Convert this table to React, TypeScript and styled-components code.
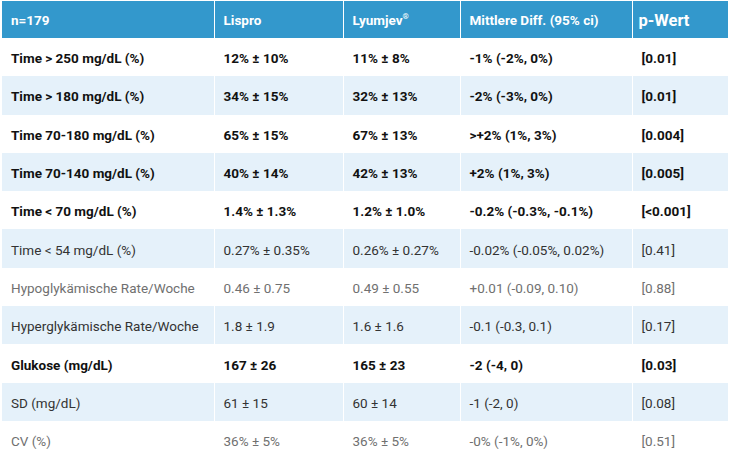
import React from "react";
import styled, { createGlobalStyle } from "styled-components";

const Global = createGlobalStyle`
  html, body { margin: 0; padding: 0; background: #fff; }
  body { font-family: Roboto, "Liberation Sans", Arial, sans-serif; }
`;

const Wrap = styled.div`
  padding: 1px 7px 0 2px;
`;

const Table = styled.table`
  width: 726px;
  border-collapse: collapse;
  table-layout: fixed;
  font-family: Roboto, "Liberation Sans", Arial, sans-serif;
`;

const Col = styled.col<{ $w: number }>`
  width: ${(p) => p.$w}px;
`;

const HeadCell = styled.th<{ $big?: boolean }>`
  box-sizing: border-box;
  background: #3398cc;
  color: #fff;
  text-align: left;
  font-weight: 700;
  font-size: ${(p) => (p.$big ? "16.5px" : "13.5px")};
  height: 37px;
  padding: 1px 0 0 ${(p) => (p.$big ? "6px" : "9px")};
  border-left: 1px solid #fff;
  &:first-child { border-left: none; }
  sup { font-size: 8px; vertical-align: 6px; line-height: 0; }
`;

const Row = styled.tr<{ $stripe: boolean }>`
  background: ${(p) => (p.$stripe ? "#e5f1fa" : "#fff")};
`;

const Cell = styled.td<{ $tone: "bold" | "dark" | "light" }>`
  box-sizing: border-box;
  height: 38.3px;
  padding: 2px 0 0 9px;
  font-size: 13.5px;
  font-weight: ${(p) => (p.$tone === "bold" ? 700 : 400)};
  color: ${(p) => (p.$tone === "bold" ? "#111" : p.$tone === "dark" ? "#333" : "#707070")};
  border-left: 1px solid #fff;
  white-space: nowrap;
  &:first-child { border-left: none; }
`;

type Tone = "bold" | "dark" | "light";
const widths = [212, 129, 117, 172, 96];
const rows: { tone: Tone; cells: string[] }[] = [
  { tone: "bold", cells: ["Time > 250 mg/dL (%)", "12% ± 10%", "11% ± 8%", "-1% (-2%, 0%)", "[0.01]"] },
  { tone: "bold", cells: ["Time > 180 mg/dL (%)", "34% ± 15%", "32% ± 13%", "-2% (-3%, 0%)", "[0.01]"] },
  { tone: "bold", cells: ["Time 70-180 mg/dL (%)", "65% ± 15%", "67% ± 13%", ">+2% (1%, 3%)", "[0.004]"] },
  { tone: "bold", cells: ["Time 70-140 mg/dL (%)", "40% ± 14%", "42% ± 13%", "+2% (1%, 3%)", "[0.005]"] },
  { tone: "bold", cells: ["Time < 70 mg/dL (%)", "1.4% ± 1.3%", "1.2% ± 1.0%", "-0.2% (-0.3%, -0.1%)", "[<0.001]"] },
  { tone: "dark", cells: ["Time < 54 mg/dL (%)", "0.27% ± 0.35%", "0.26% ± 0.27%", "-0.02% (-0.05%, 0.02%)", "[0.41]"] },
  { tone: "light", cells: ["Hypoglykämische Rate/Woche", "0.46 ± 0.75", "0.49 ± 0.55", "+0.01 (-0.09, 0.10)", "[0.88]"] },
  { tone: "dark", cells: ["Hyperglykämische Rate/Woche", "1.8 ± 1.9", "1.6 ± 1.6", "-0.1 (-0.3, 0.1)", "[0.17]"] },
  { tone: "bold", cells: ["Glukose (mg/dL)", "167 ± 26", "165 ± 23", "-2 (-4, 0)", "[0.03]"] },
  { tone: "dark", cells: ["SD (mg/dL)", "61 ± 15", "60 ± 14", "-1 (-2, 0)", "[0.08]"] },
  { tone: "light", cells: ["CV (%)", "36% ± 5%", "36% ± 5%", "-0% (-1%, 0%)", "[0.51]"] },
];

export default function App() {
  return (
    <>
      <Global />
      <Wrap>
        <Table>
          <colgroup>
            {widths.map((w, i) => (
              <Col key={i} $w={w} />
            ))}
          </colgroup>
          <thead>
            <tr>
              <HeadCell>n=179</HeadCell>
              <HeadCell>Lispro</HeadCell>
              <HeadCell>
                Lyumjev<sup>®</sup>
              </HeadCell>
              <HeadCell>Mittlere Diff. (95% ci)</HeadCell>
              <HeadCell $big>p-Wert</HeadCell>
            </tr>
          </thead>
          <tbody>
            {rows.map((r, i) => (
              <Row key={i} $stripe={i % 2 === 1}>
                {r.cells.map((c, j) => (
                  <Cell key={j} $tone={r.tone}>
                    {c}
                  </Cell>
                ))}
              </Row>
            ))}
          </tbody>
        </Table>
      </Wrap>
    </>
  );
}
